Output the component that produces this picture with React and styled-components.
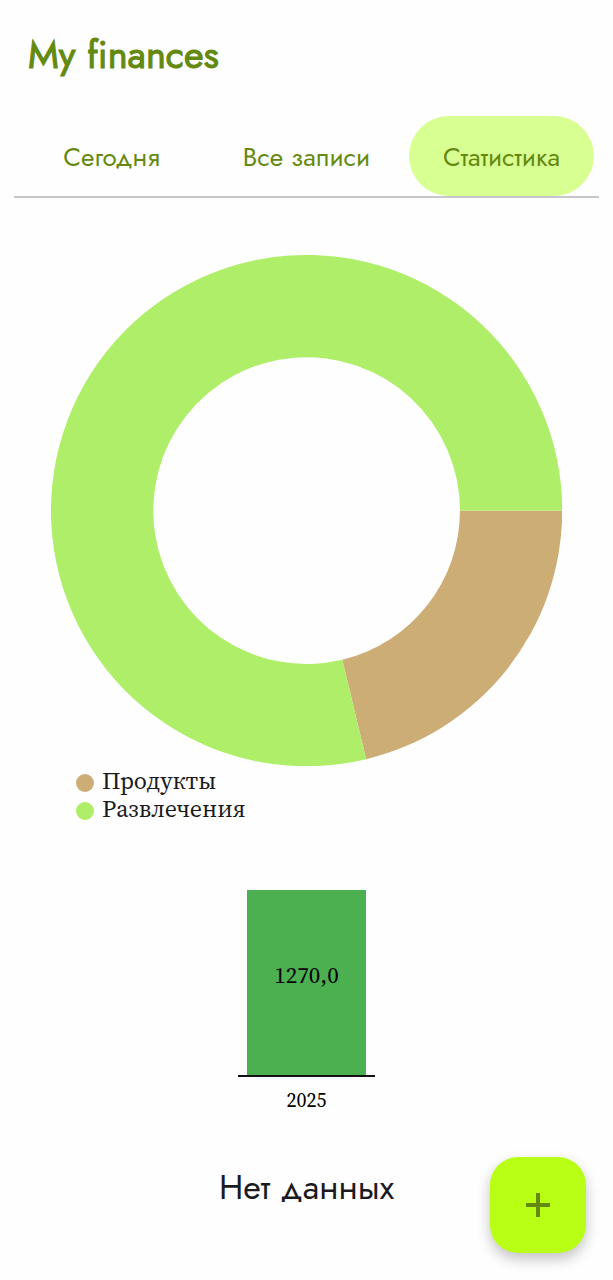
import React from "react";
import styled, { createGlobalStyle } from "styled-components";

const GlobalStyle = createGlobalStyle`
  * { box-sizing: border-box; }
  body {
    margin: 0;
    background: #fefefe;
    font-family: Jost, Lato, sans-serif;
    color: #1b1b1f;
  }
`;

const serif = `"Source Serif 4", "Liberation Serif", serif`;

const Page = styled.div`
  min-height: 100vh;
  display: flex;
  flex-direction: column;
`;

const Header = styled.header`
  padding: 28px 28px 0;
`;

const Title = styled.h1`
  margin: 0;
  font-size: 38px;
  line-height: 54px;
  font-weight: 400;
  -webkit-text-stroke: 1px currentColor;
  color: #64890f;
`;

const Tabs = styled.nav`
  display: grid;
  grid-template-columns: repeat(3, 1fr);
  margin: 34px 14px 0;
  border-bottom: 2px solid #c7c6ca;
`;

const Tab = styled.button`
  height: 80px;
  margin: 0 5px;
  padding: 2px 0 0;
  border: 0;
  border-radius: 40px;
  background: ${({ $active }) => ($active ? "#d8ff92" : "transparent")};
  color: #64890f;
  font: inherit;
  font-size: 26px;
  white-space: nowrap;
  cursor: pointer;
`;

const Content = styled.main`
  display: flex;
  flex-direction: column;
  align-items: center;
  padding: 57px 0 56px;
`;

const Donut = styled.svg`
  display: block;
  width: 83.4%;
  aspect-ratio: 1;
`;

const Legend = styled.ul`
  align-self: stretch;
  margin: 1px 0 0;
  padding: 0 76px;
  list-style: none;
  font-family: ${serif};
  font-size: 24px;
  line-height: 28px;
`;

const LegendItem = styled.li`
  display: flex;
  align-items: center;
  gap: 8px;
`;

const Swatch = styled.span`
  width: 18px;
  height: 18px;
  margin-top: 4px;
  border-radius: 50%;
  background: ${({ $color }) => $color};
`;

const BarChart = styled.figure`
  display: flex;
  flex-direction: column;
  align-items: center;
  margin: 67px 0 0;
  font-family: ${serif};
  color: #000;
`;

const Plot = styled.div`
  padding: 0 9px;
  border-bottom: 2px solid #111;
`;

const Bar = styled.div`
  display: flex;
  align-items: center;
  justify-content: center;
  width: 119px;
  height: 185px;
  padding-bottom: 15px;
  background: #4caf50;
  font-size: 23px;
`;

const BarLabel = styled.figcaption`
  margin-top: 11px;
  font-size: 20px;
  line-height: 24px;
`;

const Empty = styled.p`
  margin: 52px 0 0;
  font-size: 34px;
  line-height: 48px;
`;

const AddButton = styled.button`
  position: fixed;
  right: 27px;
  bottom: 27px;
  display: grid;
  place-items: center;
  width: 96px;
  height: 96px;
  padding: 0;
  border: 0;
  border-radius: 28px;
  background: #b9ff15;
  color: #64890f;
  box-shadow: 0 6px 14px rgba(0, 0, 0, 0.24);
  cursor: pointer;
`;

const TABS = ["Сегодня", "Все записи", "Статистика"];
const CATEGORIES = [
  { name: "Продукты", value: 270, color: "#cdad76" },
  { name: "Развлечения", value: 1000, color: "#aeee68" },
];

function DonutChart({ items }) {
  const total = items.reduce((sum, item) => sum + item.value, 0);
  let start = 0;
  const point = (radius, angle) =>
    `${50 + radius * Math.cos(angle)} ${50 + radius * Math.sin(angle)}`;
  return (
    <Donut viewBox="0 0 100 100" role="img" aria-label="Расходы по категориям">
      {items.map(({ name, value, color }) => {
        const from = start;
        const to = from + (value / total) * Math.PI * 2;
        const large = to - from > Math.PI ? 1 : 0;
        start = to;
        return (
          <path
            key={name}
            fill={color}
            d={`M${point(50, from)}A50 50 0 ${large} 1 ${point(50, to)}L${point(30, to)}A30 30 0 ${large} 0 ${point(30, from)}Z`}
          />
        );
      })}
    </Donut>
  );
}

export default function App() {
  return (
    <Page>
      <GlobalStyle />
      <Header>
        <Title>My finances</Title>
      </Header>
      <Tabs>
        {TABS.map((label, i) => (
          <Tab key={label} type="button" $active={i === 2} aria-current={i === 2 ? "page" : undefined}>
            {label}
          </Tab>
        ))}
      </Tabs>
      <Content>
        <DonutChart items={CATEGORIES} />
        <Legend>
          {CATEGORIES.map(({ name, color }) => (
            <LegendItem key={name}>
              <Swatch $color={color} />
              {name}
            </LegendItem>
          ))}
        </Legend>
        <BarChart>
          <Plot>
            <Bar>1270,0</Bar>
          </Plot>
          <BarLabel>2025</BarLabel>
        </BarChart>
        <Empty>Нет данных</Empty>
      </Content>
      <AddButton type="button" aria-label="Добавить">
        <svg width="24" height="24" viewBox="0 0 24 24" fill="none" stroke="currentColor" strokeWidth="4">
          <path d="M12 0v24M0 12h24" />
        </svg>
      </AddButton>
    </Page>
  );
}
